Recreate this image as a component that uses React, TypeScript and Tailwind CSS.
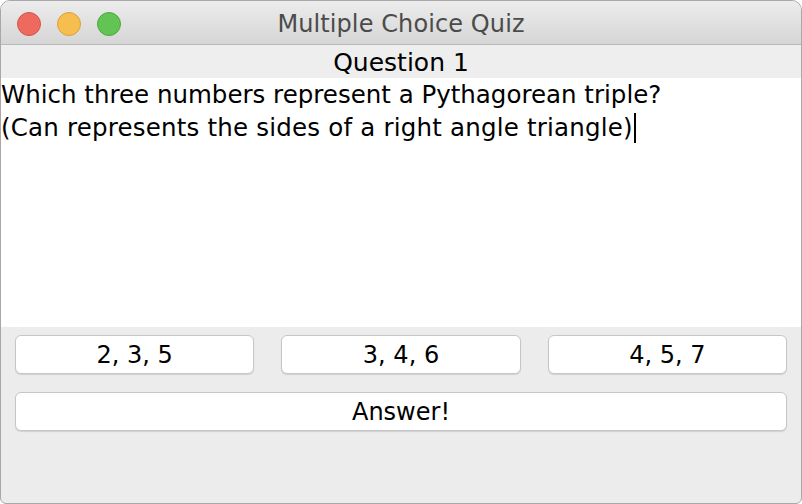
export default function App() {
  const options = ["2, 3, 5", "3, 4, 6", "4, 5, 7"];

  return (
    <div className="w-[802px] h-[504px] bg-white">
      <div className="w-full h-full flex flex-col bg-[#ececec] border border-[#a8a8a8] rounded-t-[10px] rounded-b-[6px] overflow-hidden font-['DejaVu_Sans',sans-serif]">
        {/* title bar */}
        <div className="relative h-[44px] shrink-0 flex items-center justify-center bg-gradient-to-b from-[#ececec] to-[#d6d6d6] border-b border-[#b9b9b9]">
          <div className="absolute left-[16px] top-[11px] flex gap-[16px]">
            <span className="w-[24px] h-[24px] rounded-full bg-[#ee6a5f] border border-[#d6534a]" />
            <span className="w-[24px] h-[24px] rounded-full bg-[#f5be4f] border border-[#d9a13a]" />
            <span className="w-[24px] h-[24px] rounded-full bg-[#61c454] border border-[#4ea73f]" />
          </div>
          <span className="text-[24px] text-[#4b4b4b] leading-none pt-[3px] tracking-[0.1px]">Multiple Choice Quiz</span>
        </div>

        {/* question label */}
        <div className="h-[33px] shrink-0 flex items-center justify-center bg-[#eeeeee] text-[25px] leading-none pt-[2px] text-black">
          Question 1
        </div>

        {/* text area */}
        <div className="h-[249px] shrink-0 bg-white text-[24.5px] leading-[33px] text-black">
          <div>Which three numbers represent a Pythagorean triple?</div>
          <div className="flex items-center tracking-[0.2px]">
            (Can represents the sides of a right angle triangle)
            <span className="inline-block w-[2px] h-[30px] bg-black ml-[1px]" />
          </div>
        </div>

        {/* options */}
        <div className="flex flex-col gap-[18px] px-[14px] pt-[8px]">
          <div className="grid grid-cols-3 gap-[27px]">
            {options.map((o) => (
              <button
                key={o}
                className="h-[39px] bg-white rounded-[6px] border border-[#c6c6c6] shadow-[0_1px_1px_rgba(0,0,0,0.12)] text-[24px] text-black"
              >
                {o}
              </button>
            ))}
          </div>
          <button className="h-[39px] bg-white rounded-[6px] border border-[#c6c6c6] shadow-[0_1px_1px_rgba(0,0,0,0.12)] text-[24px] text-black">
            Answer!
          </button>
        </div>
      </div>
    </div>
  );
}
